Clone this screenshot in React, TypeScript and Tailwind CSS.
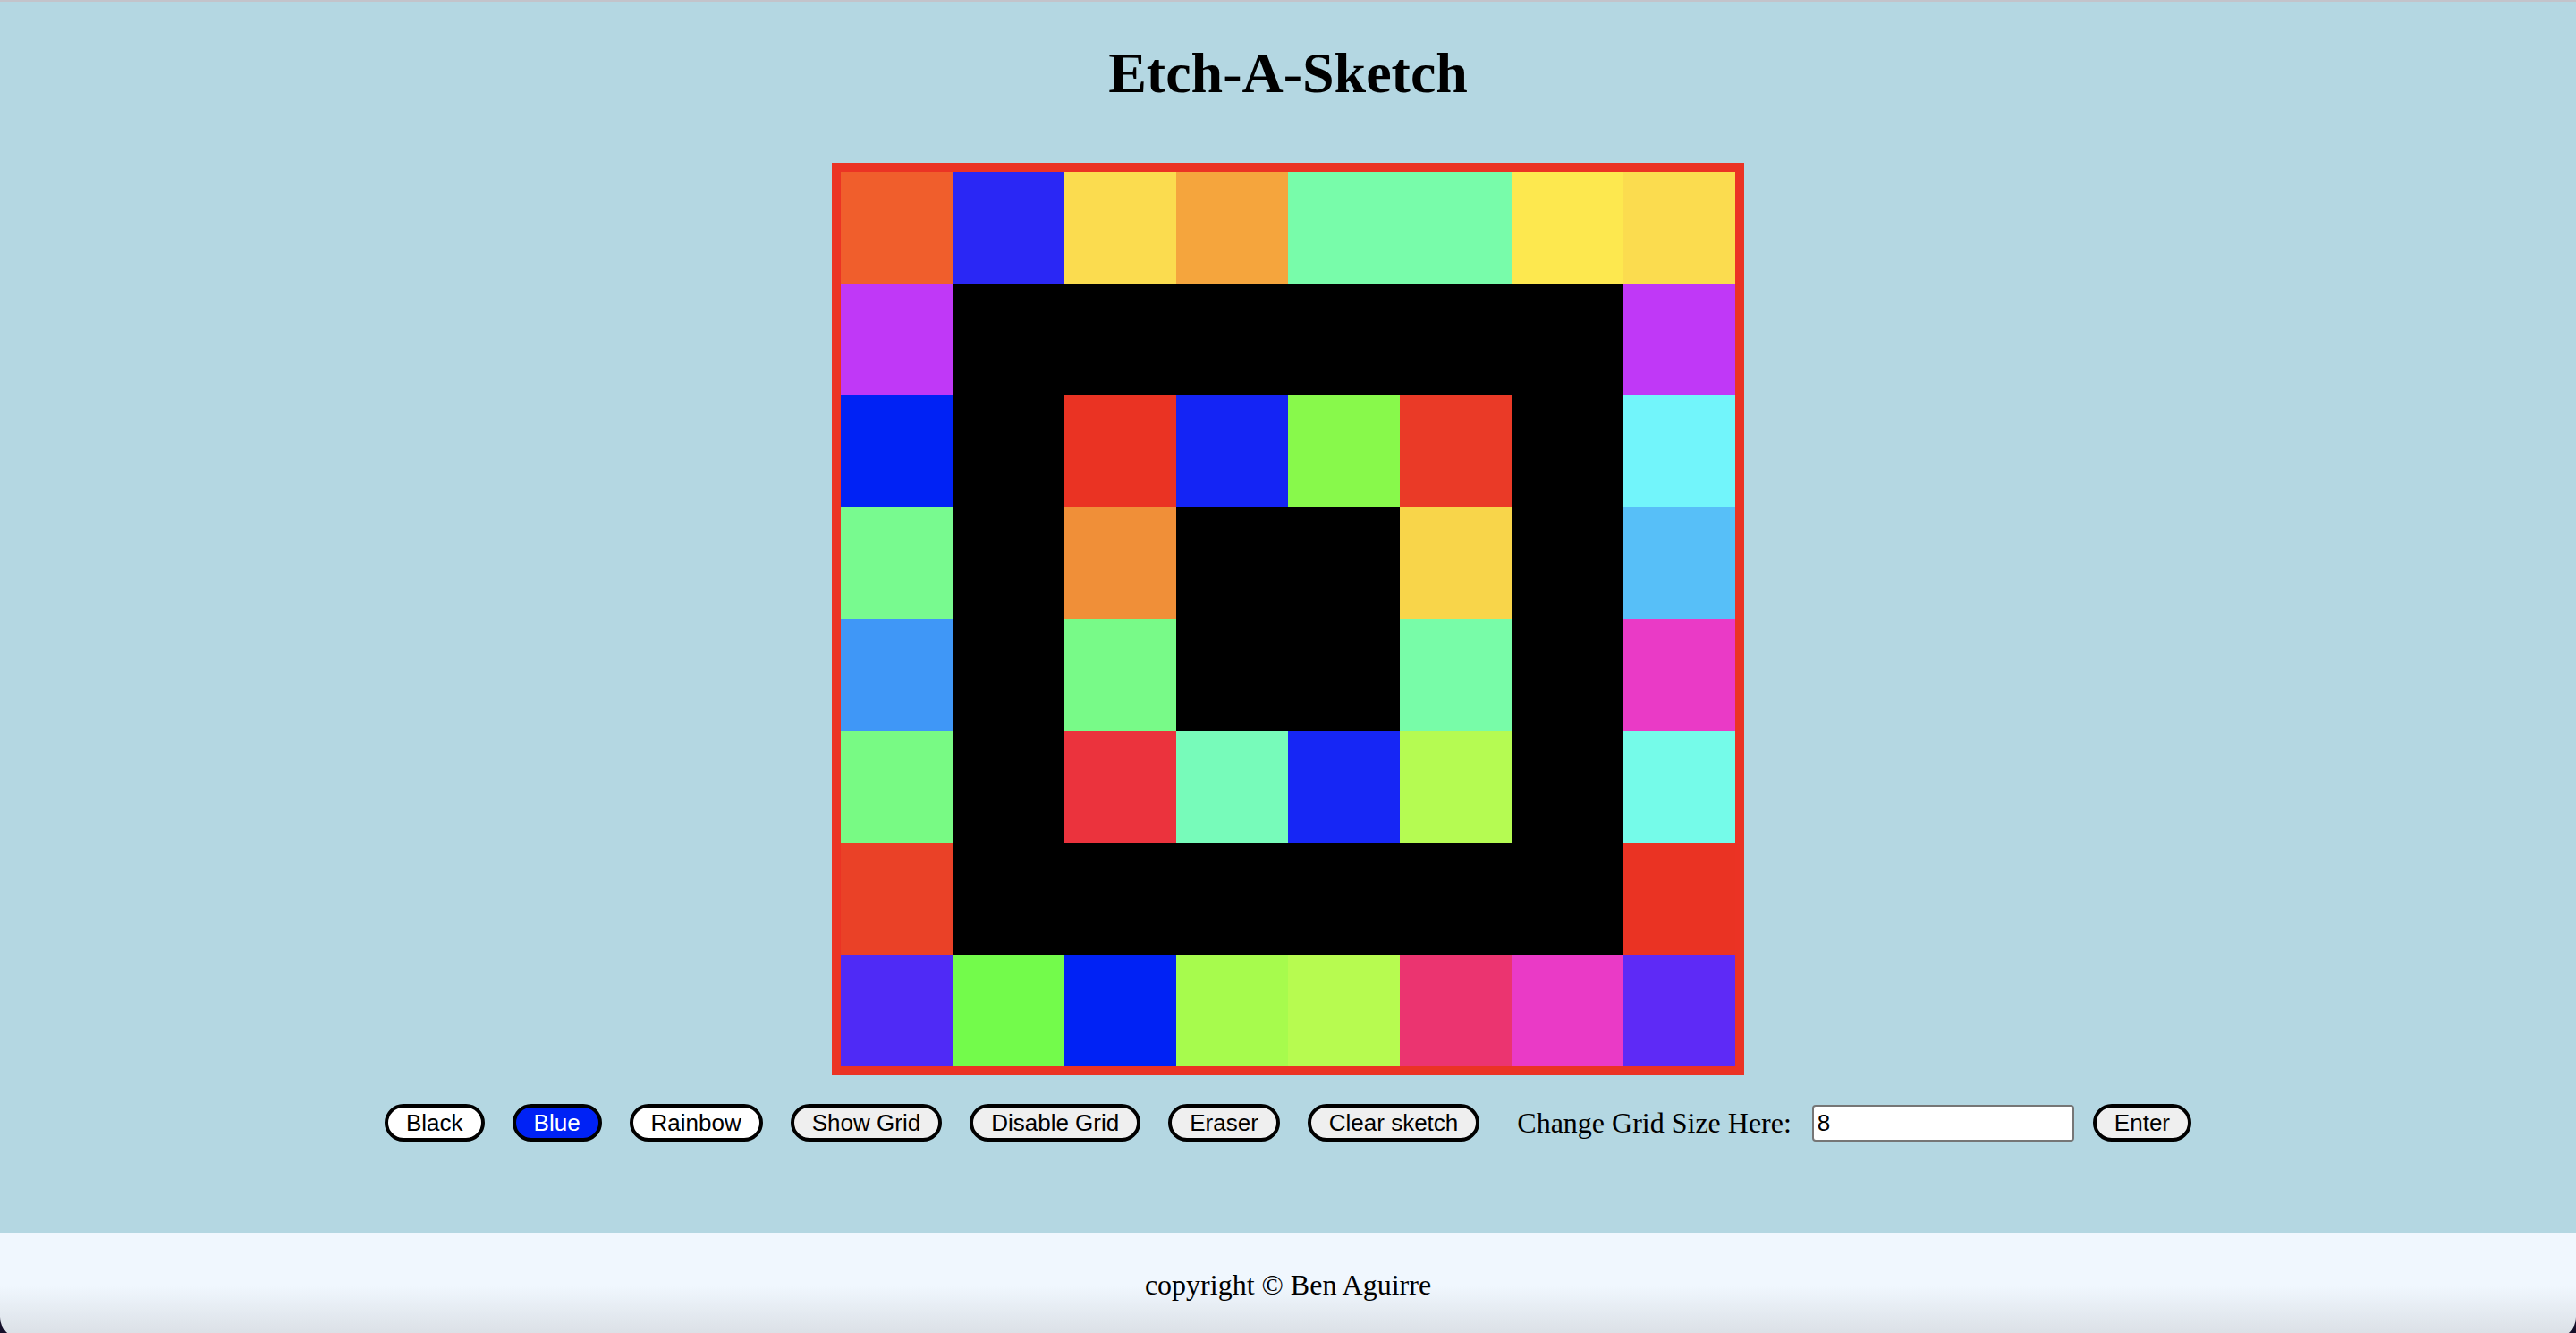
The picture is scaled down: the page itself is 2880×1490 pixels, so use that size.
import { useState } from "react";

const CELLS: string[][] = [
  ["#f05e2c", "#2a27f5", "#fbdc4f", "#f5a53d", "#78fcaa", "#78fcaa", "#fde84f", "#fbdc4f"],
  ["#c038f7", "#000", "#000", "#000", "#000", "#000", "#000", "#c038f7"],
  ["#0022f5", "#000", "#ea3323", "#1424f5", "#88f94b", "#ea3a27", "#000", "#72f5fb"],
  ["#78fa8f", "#000", "#f08f38", "#000", "#000", "#f8d54a", "#000", "#57bff8"],
  ["#3f97f7", "#000", "#78fa88", "#000", "#000", "#78fca8", "#000", "#ea3ac6"],
  ["#78fa84", "#000", "#eb333d", "#77fbba", "#1626f5", "#b5fb52", "#000", "#75fbe9"],
  ["#ea4127", "#000", "#000", "#000", "#000", "#000", "#000", "#ea3323"],
  ["#4f2af6", "#73fb4b", "#0022f5", "#a7fb4d", "#b7fb50", "#eb3470", "#ea3ac6", "#5e2af6"],
];

const MODES = ["Black", "Blue", "Rainbow"];
const TOOLS = ["Show Grid", "Disable Grid", "Eraser", "Clear sketch"];

const btnBase =
  "flex h-[42px] items-center rounded-full border-4 border-black px-5 font-['Liberation_Sans',Arial,sans-serif] text-[26px] leading-none";

export default function App() {
  const [mode, setMode] = useState("Blue");
  const [size, setSize] = useState("8");

  return (
    <div className="min-h-screen bg-[#15102a] font-['Liberation_Serif','Times_New_Roman',serif] text-black">
      <div className="overflow-hidden rounded-b-[24px] border-t-2 border-[#c3c3ca]">
        {/* Main */}
        <div className="flex flex-col items-center bg-[#b4d7e2] pb-[99px] pt-[43px]">
          <h1 className="text-[64px] font-bold leading-[74px]">Etch-A-Sketch</h1>

          <div className="mt-[63px] grid h-[1020px] w-[1020px] grid-cols-8 grid-rows-8 border-[10px] border-[#eb3324]">
            {CELLS.flat().map((color, i) => (
              <div key={i} style={{ backgroundColor: color }} />
            ))}
          </div>

          {/* Controls */}
          <div className="mt-[29px] flex items-center">
            <div className="flex items-center gap-[31px]">
              {MODES.map((m) => (
                <button
                  key={m}
                  onClick={() => setMode(m)}
                  className={`${btnBase} ${
                    mode === m ? "bg-[#0022f5] text-white" : "bg-white text-black"
                  }`}
                >
                  {m}
                </button>
              ))}
              {TOOLS.map((t) => (
                <button key={t} className={`${btnBase} bg-[#efefef] text-black`}>
                  {t}
                </button>
              ))}
            </div>
            <label htmlFor="size" className="ml-[42px] text-[32px]">
              Change Grid Size Here:
            </label>
            <input
              id="size"
              type="text"
              value={size}
              onChange={(e) => setSize(e.target.value)}
              className="ml-[23px] h-[41px] w-[293px] rounded-[4px] border-2 border-[#767676] bg-white px-[4px] font-['Liberation_Sans',Arial,sans-serif] text-[26px] outline-none"
            />
            <button className={`${btnBase} ml-[21px] bg-[#efefef] text-black`}>Enter</button>
          </div>
        </div>

        {/* Footer */}
        <div className="h-[118px] bg-[linear-gradient(to_bottom,#f0f7fe_50%,#d9dee4)] pt-[40px] text-center text-[32px] leading-[37px]">
          copyright © Ben Aguirre
        </div>
      </div>
    </div>
  );
}
